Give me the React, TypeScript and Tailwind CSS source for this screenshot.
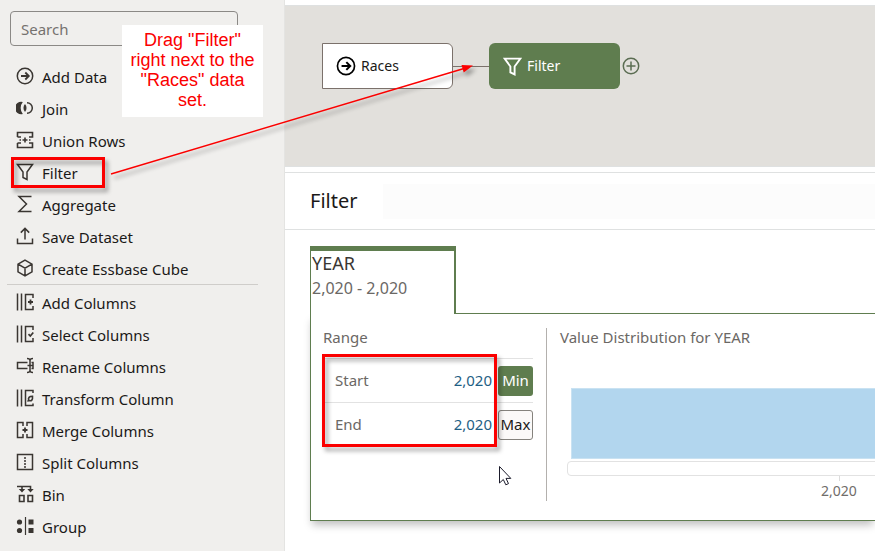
import type { ReactNode } from 'react';

type Step = { label: string; icon: ReactNode };

const columnBars = <path d="M1.5 0.5v17M5.500 0.5v17" />;
const openColumn = <path d="M17 5V1.5H9.500v15H17V13" />;

const dataSteps: Step[] = [
  {
    label: 'Add Data',
    icon: (
      <>
        <circle cx="9" cy="9" r="7.7" />
        <path d="M5 9h7.5M9.3 5.5L12.8 9l-3.5 3.5" strokeWidth="1.8" />
      </>
    ),
  },
  {
    label: 'Join',
    icon: (
      <>
        <path d="M6.800 3a6.200 6.200 0 1 0 0 12a9.500 9.500 0 0 1 0-12z" fill="currentColor" stroke="none" />
        <path d="M9 5a6 6 0 0 1 0 8a6 6 0 0 1 0-8z" fill="currentColor" stroke="none" />
        <path d="M11 3.700a5.300 5.300 0 1 1 0 10.600" strokeWidth="1.5" />
      </>
    ),
  },
  {
    label: 'Union Rows',
    icon: (
      <>
        <path d="M1.5 6V1.500h15V6H13M1.500 6H5M1.500 12v4.500h15V12H13M1.500 12H5" strokeWidth="1.600" />
        <path d="M9 6.500v5M6.500 9h5M3.500 9h1.500M13 9h1.500" strokeWidth="1.600" />
      </>
    ),
  },
  {
    label: 'Filter',
    icon: <path d="M1.5 1.500h15l-5.500 7.500v7.500l-4-2V9z" />,
  },
  {
    label: 'Aggregate',
    icon: <path d="M15.500 1.500H3L10.500 9L3 16.500h12.500" />,
  },
  {
    label: 'Save Dataset',
    icon: <path d="M1.500 11.500v5h15v-5M9 12.500V1.500M4.800 5.600L9 1.400l4.200 4.200" />,
  },
  {
    label: 'Create Essbase Cube',
    icon: <path d="M9 1.200l7 3.900v7.800l-7 3.900l-7-3.900V5.100zM2 5.100l7 4.100l7-4.100M9 9.200v7.600" />,
  },
];

const columnSteps: Step[] = [
  {
    label: 'Add Columns',
    icon: (
      <>
        {columnBars}
        {openColumn}
        <path d="M14.500 6.500v5M12 9h5" strokeWidth="1.8" />
      </>
    ),
  },
  {
    label: 'Select Columns',
    icon: (
      <>
        {columnBars}
        {openColumn}
        <path d="M12.500 9.200l1.800 1.800L17.300 7.500" strokeWidth="1.700" />
      </>
    ),
  },
  {
    label: 'Rename Columns',
    icon: (
      <>
        <path d="M11.500 5.500h-10v6h10" />
        <path d="M11 1.500c2 0 3 .5 3 2v10c0 1.500-1 2-3 2M17 1.500c-2 0-3 .5-3 2M14 13.500c0 1.500 1 2 3 2M15.500 5.500h1.500v6h-1.500M11.500 8.500h5" />
      </>
    ),
  },
  {
    label: 'Transform Column',
    icon: (
      <>
        {columnBars}
        <path d="M17 4V1.500H9.500v15H17V14.500" />
        <path d="M11.500 12.500l1.200-1.200M12.700 11.300c-.8-2.500.5-4 3.800-4c.4 3.500-1 5.300-3.800 4z" strokeWidth="1.600" />
      </>
    ),
  },
  {
    label: 'Merge Columns',
    icon: (
      <>
        <path d="M7 5V1.500H1.500v15H7V13M11 5V1.500h5.500v15H11V13" />
        <path d="M9 6.500v5M6.500 9h5" strokeWidth="1.8" />
      </>
    ),
  },
  {
    label: 'Split Columns',
    icon: (
      <>
        <path d="M1.5 1.500h15v15h-15z" />
        <path d="M9 4v11" strokeDasharray="2 1" />
      </>
    ),
  },
  {
    label: 'Bin',
    icon: (
      <>
        <path d="M1 1.500h13.500V4M6 1.500V4M3.500 10.500h4.500v6H3.500zM12 10.500h4.500v6H12z" strokeWidth="1.600" />
        <path d="M2.800 4h6.400L6 7.500zM11.300 4h6.400l-3.200 3.500z" fill="currentColor" stroke="none" />
      </>
    ),
  },
  {
    label: 'Group',
    icon: (
      <>
        <g fill="currentColor" stroke="none">
          <circle cx="3.500" cy="5" r="2.600" />
          <circle cx="3.500" cy="13.500" r="2.600" />
          <path d="M12.500 2.500h5v5h-5zM12.500 11h5v5h-5z" />
        </g>
        <path d="M9.500 0v18" strokeWidth="1.200" />
      </>
    ),
  },
];

function Icon({ children, className }: { children: ReactNode; className: string }) {
  return (
    <svg viewBox="0 0 18 18" fill="none" stroke="currentColor" strokeWidth="1.5" className={className} aria-hidden="true">
      {children}
    </svg>
  );
}

function StepList({ steps }: { steps: Step[] }) {
  return (
    <ul>
      {steps.map((step) => (
        <li key={step.label}>
          <button type="button" className="flex h-8 w-full items-center gap-2 pl-4 text-left text-[15px]">
            <Icon className="mb-0.5 size-[18px] shrink-0 text-[#3a3632]">{step.icon}</Icon>
            {step.label}
          </button>
        </li>
      ))}
    </ul>
  );
}

function Sidebar() {
  return (
    <aside className="w-[285px] shrink-0 border-r border-[#e4e4e2] bg-[#f0efed] pt-[11px]">
      <input
        type="search"
        aria-label="Search"
        placeholder="Search"
        className="ml-[10px] block h-[35px] w-[228px] rounded border border-[#8b8986] px-[10px] text-[15px] placeholder:text-[#75726f]"
      />
      <nav className="pt-[15px]">
        <StepList steps={dataSteps} />
        <hr className="-mt-px mr-[26px] mb-[2px] ml-[7px] border-[#cfcdca]" />
        <StepList steps={columnSteps} />
      </nav>
    </aside>
  );
}

function FlowCanvas() {
  return (
    <section className="relative mt-[5px] h-[162px] border-y border-[#dfe1e1] bg-[#e2e0dc]">
      <div className="absolute top-[37px] left-[37px] flex items-center text-sm">
        <button type="button" className="flex h-[46px] w-[131px] items-center gap-[5px] rounded-r-md border border-[#7b716b] bg-white pl-[13px]">
          <Icon className="size-5 text-black">{dataSteps[0].icon}</Icon>
          Races
        </button>
        <span className="h-px w-9 bg-[#7b716b]" />
        <button type="button" className="flex h-[46px] w-[131px] items-center gap-[5px] rounded-md bg-[#5f7d4f] pl-[14px] text-white">
          <Icon className="size-[19px]">
            <path d="M1.500 1.500h15l-5.500 7.500v7.500l-4-2V9z" strokeWidth="1.800" />
          </Icon>
          Filter
        </button>
        <button type="button" aria-label="Add step" className="ml-0.5 text-[#5b6d52]">
          <Icon className="size-[18px]">
            <circle cx="9" cy="9" r="7.700" />
            <path d="M9 4.500v9M4.500 9h9" />
          </Icon>
        </button>
      </div>
    </section>
  );
}

function RangeFields() {
  return (
    <div className="w-[210px] shrink-0 text-[15px]">
      <h3 className="h-[31px] leading-5 text-[#6b6865]">Range</h3>
      <div className="flex h-11 items-center border-t border-[#e2e2e2]">
        <label htmlFor="start" className="w-20 pl-3 text-[#6b6865]">Start</label>
        <input id="start" defaultValue="2,020" className="w-[89px] text-right text-[#1f5f85]" />
        <button type="button" className="ml-[6px] h-[30px] w-[35px] rounded-[3px] bg-[#5f7d4f] text-white">Min</button>
      </div>
      <div className="flex h-11 items-center border-t border-[#e2e2e2]">
        <label htmlFor="end" className="w-20 pl-3 text-[#6b6865]">End</label>
        <input id="end" defaultValue="2,020" className="w-[89px] text-right text-[#1f5f85]" />
        <button type="button" className="ml-[6px] h-[30px] w-[35px] rounded-[3px] border border-[#85827d] bg-[#fbf9f8]">Max</button>
      </div>
    </div>
  );
}

function Distribution() {
  return (
    <div className="mt-px ml-[13px] min-w-0 flex-1 overflow-hidden border-l border-[#b3b0ad] pl-[13px]">
      <h3 className="-mt-px text-[15px] leading-5 text-[#6b6865]">Value Distribution for YEAR</h3>
      <div className="ml-[7px] w-[544px] pt-[41px]">
        <div className="mx-1 h-[71px] border border-[#c9e2f2] bg-[#b2d6ee]" />
        <div className="mt-0.5 h-[15px] rounded border border-[#e2e2e2]" />
        <div className="mx-auto h-[5px] w-px bg-[#dcdcdc]" />
        <p className="text-center text-sm leading-5 text-[#706d6a]">
          2,020
        </p>
      </div>
    </div>
  );
}

function FilterPanel() {
  return (
    <section className="min-w-0 pt-4 pl-[25px]">
      <button
        type="button"
        className="relative z-10 -mb-px block h-[68px] w-[146px] border-t-[5px] border-r-2 border-l border-[#5f7d4f] bg-white px-px text-left"
      >
        <span className="block text-lg leading-6 text-[#3a3632]">YEAR</span>
        <span className="block pt-px pb-[14px] text-base leading-6 text-[#6b6865]">2,020 - 2,020</span>
      </button>
      <div className="flex border border-r-0 border-[#5f7d4f] bg-white pt-[13px] pb-[19px] pl-3 shadow-[0_6px_8px_-2px_rgba(0,0,0,0.25)]">
        <RangeFields />
        <Distribution />
      </div>
    </section>
  );
}

function Annotations() {
  return (
    <>
      <p className="absolute top-[25px] left-[122px] w-[141px] bg-white px-2 pt-[5px] pb-[7px] text-center font-['Liberation_Sans',Arial,sans-serif] text-lg leading-5 text-[#fb0000]">
        Drag "Filter" right next to the "Races" data set.
      </p>
      <svg className="pointer-events-none absolute top-0 left-0" width="560" height="500" aria-hidden="true">
        <g className="drop-shadow-[3px_4px_2px_rgba(0,0,0,0.35)]" fill="none" stroke="#fb0000">
          <path d="M111 174L464 68.500" strokeWidth="1.500" />
          <path d="M473 65.500l-11.500-.6l2.200 7.600z" fill="#fb0000" stroke="none" />
          <path d="M12.500 158.500h91v28h-91z" strokeWidth="3" />
          <path d="M323.500 355.500h172v90h-172z" strokeWidth="3" />
        </g>
        <path d="M499.500 466.500v16.500l3.800-3.500l2.500 5.300l2.700-1.200l-2.500-5.200h4.800z" fill="#fff" stroke="#1b1b2b" />
      </svg>
    </>
  );
}

export default function App() {
  return (
    <div className="relative flex min-h-screen overflow-hidden bg-white font-['Noto_Sans','Open_Sans',sans-serif] text-[#1b1918]">
      <Sidebar />
      <main className="min-w-0 flex-1">
        <FlowCanvas />
        <header className="mt-[5px] flex h-[58px] items-center gap-[26px] border-y border-[#dfe1e1] pl-[25px]">
          <h2 className="text-xl">Filter</h2>
          <div className="h-[35px] flex-1 bg-[#fcfcfc]" />
        </header>
        <FilterPanel />
      </main>
      <Annotations />
    </div>
  );
}
